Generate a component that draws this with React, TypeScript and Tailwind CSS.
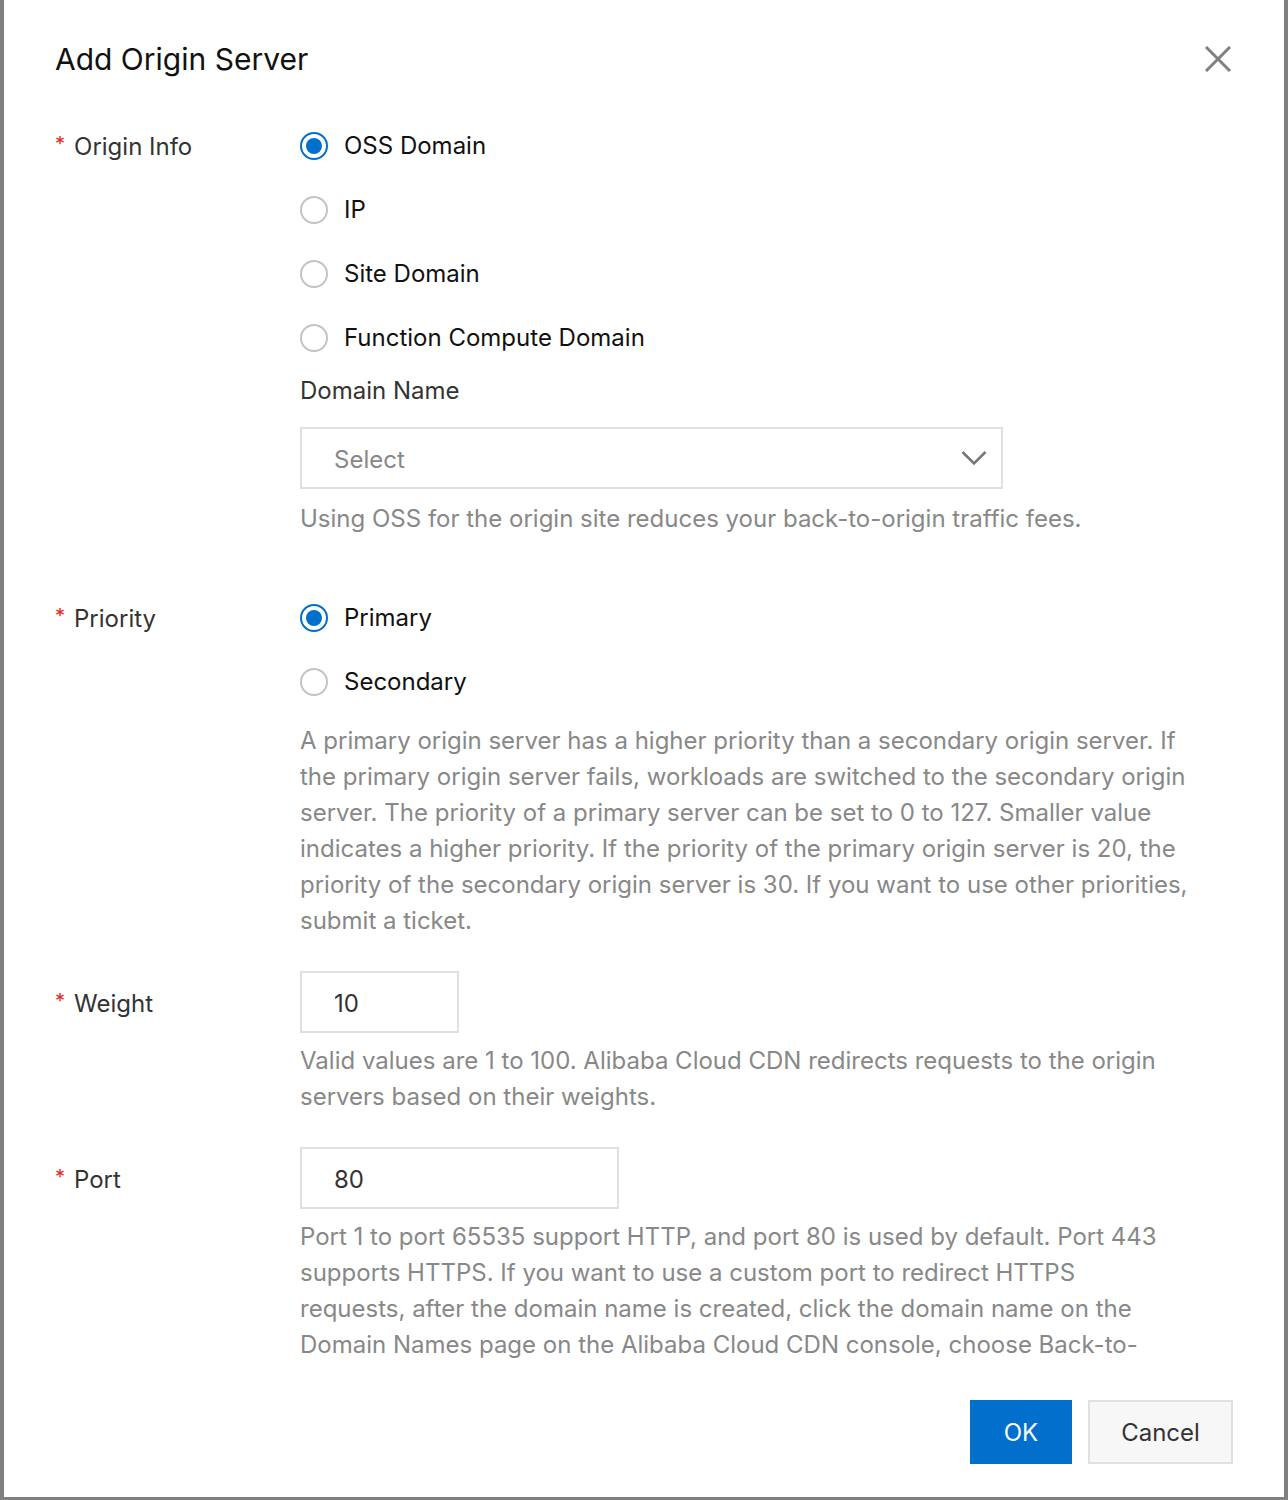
import { ReactNode } from "react";

type RadioProps = { label: string; checked?: boolean };

function Radio({ label, checked }: RadioProps) {
  return (
    <label className="flex h-[64px] items-center gap-[16px]">
      <span
        className={
          checked
            ? "flex h-[28px] w-[28px] items-center justify-center rounded-full border-2 border-[#0070cc]"
            : "h-[28px] w-[28px] rounded-full border-2 border-[#c4c4c4]"
        }
      >
        {checked && <span className="h-[16px] w-[16px] rounded-full bg-[#0070cc]" />}
      </span>
      <span className="text-[24px] text-[#111]">{label}</span>
    </label>
  );
}

function FormRow({ label, children, className }: { label: string; children: ReactNode; className?: string }) {
  return (
    <div className={`grid grid-cols-[245px_1fr] ${className ?? ""}`}>
      <div className="flex h-[64px] items-center pt-[2px] text-[24px] text-[#333]">
        <span className="mr-[9px] -mt-[6px] text-[20px] text-[#e5261f]">*</span>
        {label}
      </div>
      <div>{children}</div>
    </div>
  );
}

// help text keeps the console's own line breaks
function Help({ lines, className }: { lines: string[]; className?: string }) {
  return (
    <div className={`text-[24px] leading-[36px] text-[#888] ${className ?? ""}`}>
      {lines.map((line) => (
        <p key={line} className="whitespace-nowrap">
          {line}
        </p>
      ))}
    </div>
  );
}

export default function App() {
  return (
    <div
      className="flex min-h-[1500px] w-full justify-center bg-[#808080] px-[4px]"
      style={{ fontFamily: "Inter, 'Noto Sans', sans-serif" }}
    >
      <div className="flex h-[1497px] w-[1280px] flex-col bg-white px-[51px]">
        {/* header */}
        <div className="flex items-center justify-between pt-[40px]">
          <h2 className="text-[30px] leading-[38px] text-[#111]">Add Origin Server</h2>
          <button className="mr-[2px] flex h-[38px] w-[26px] items-center justify-center">
            <svg width="26" height="26" viewBox="0 0 26 26" fill="none">
              <path d="M1 1L25 25M25 1L1 25" stroke="#808080" strokeWidth="3" />
            </svg>
          </button>
        </div>

        <div className="flex-1 overflow-hidden pt-[36px]">
          <FormRow label="Origin Info">
            <Radio label="OSS Domain" checked />
            <Radio label="IP" />
            <Radio label="Site Domain" />
            <Radio label="Function Compute Domain" />
            <div className="mt-[3px] text-[24px] leading-[36px] text-[#333]">Domain Name</div>
            <div className="mt-[18px] flex h-[62px] w-[703px] items-center justify-between border-2 border-[#e0e0e0] pl-[32px] pr-[14px]">
              <span className="pt-[3px] text-[24px] text-[#888]">Select</span>
              <svg width="26" height="16" viewBox="0 0 26 16" fill="none">
                <path d="M1.5 2L13 13.5L24.5 2" stroke="#777" strokeWidth="2.5" />
              </svg>
            </div>
            <Help
              className="mt-[12px]"
              lines={["Using OSS for the origin site reduces your back-to-origin traffic fees."]}
            />
          </FormRow>

          <FormRow label="Priority" className="mt-[49px]">
            <Radio label="Primary" checked />
            <Radio label="Secondary" />
            <Help
              className="mt-[9px]"
              lines={[
                "A primary origin server has a higher priority than a secondary origin server. If",
                "the primary origin server fails, workloads are switched to the secondary origin",
                "server. The priority of a primary server can be set to 0 to 127. Smaller value",
                "indicates a higher priority. If the priority of the primary origin server is 20, the",
                "priority of the secondary origin server is 30. If you want to use other priorities,",
                "submit a ticket.",
              ]}
            />
          </FormRow>

          <FormRow label="Weight" className="mt-[32px]">
            <div className="flex h-[62px] w-[159px] items-center border-2 border-[#e0e0e0] pl-[32px] pt-[3px] text-[24px] text-[#333]">
              10
            </div>
            <Help
              className="mt-[10px]"
              lines={[
                "Valid values are 1 to 100. Alibaba Cloud CDN redirects requests to the origin",
                "servers based on their weights.",
              ]}
            />
          </FormRow>

          <FormRow label="Port" className="mt-[32px]">
            <div className="flex h-[62px] w-[319px] items-center border-2 border-[#e0e0e0] pl-[32px] pt-[3px] text-[24px] text-[#333]">
              80
            </div>
            <Help
              className="mt-[10px]"
              lines={[
                "Port 1 to port 65535 support HTTP, and port 80 is used by default. Port 443",
                "supports HTTPS. If you want to use a custom port to redirect HTTPS",
                "requests, after the domain name is created, click the domain name on the",
                "Domain Names page on the Alibaba Cloud CDN console, choose Back-to-",
                "Origin > Origin Port, and then configure a custom port.",
              ]}
            />
          </FormRow>
        </div>

        {/* footer */}
        <div className="flex justify-end gap-[16px] pb-[33px] pt-[32px]">
          <button className="h-[64px] w-[102px] bg-[#0070cc] pt-[2px] text-[24px] text-white">OK</button>
          <button className="h-[64px] w-[145px] border-2 border-[#e0e0e0] bg-[#f7f7f7] pt-[2px] text-[24px] text-[#333]">
            Cancel
          </button>
        </div>
      </div>
    </div>
  );
}
